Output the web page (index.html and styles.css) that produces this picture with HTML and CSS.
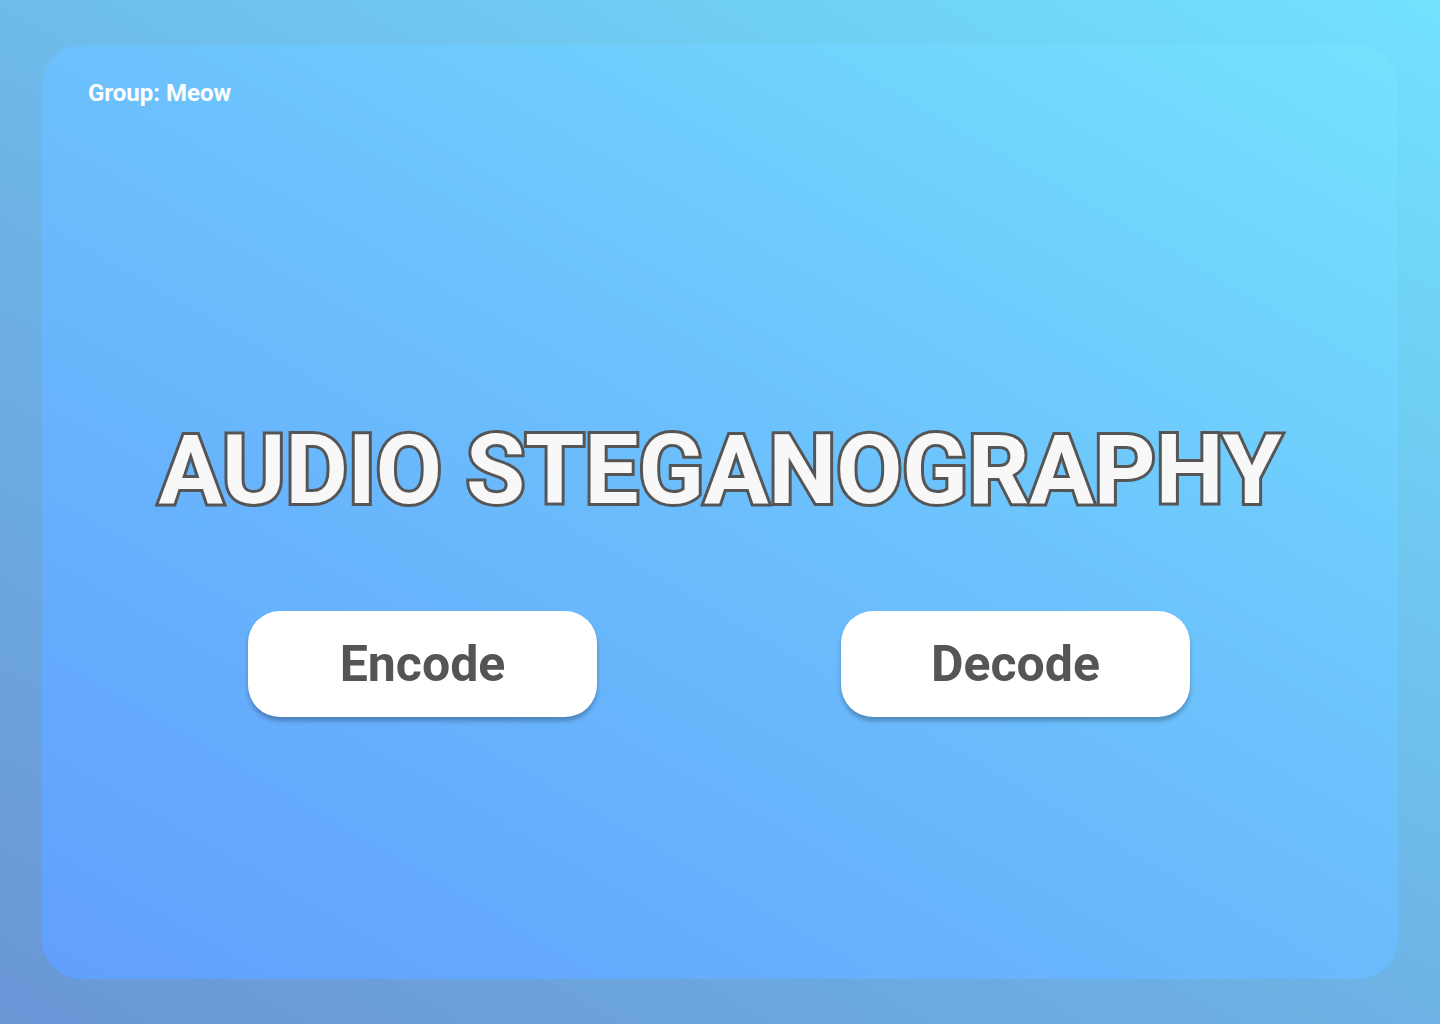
FILE: index.html
```html
<!DOCTYPE html>
<html lang="en">
<head>
<meta charset="utf-8">
<title>Audio Steganography</title>
<link rel="stylesheet" href="styles.css">
</head>
<body>
<main class="card">
  <div class="group">Group: Meow</div>
  <h1 class="title">AUDIO STEGANOGRAPHY</h1>
  <div class="actions">
    <button class="btn">Encode</button>
    <button class="btn">Decode</button>
  </div>
</main>
</body>
</html>
```
FILE: styles.css
```css
* { box-sizing: border-box; }
html, body { margin: 0; padding: 0; }
body {
  width: 1440px;
  height: 1024px;
  overflow: hidden;
  font-family: Roboto, "Liberation Sans", sans-serif;
  background: linear-gradient(30deg, #6a96d6 0%, #6db3e6 45%, #72e2fd 100%);
  padding: 45px 42px;
}
.card {
  height: 934px;
  border-radius: 40px;
  background: linear-gradient(30deg, #619ffd 0%, #6bbdfc 50%, #74e2fd 100%);
  padding: 36px 46px;
  display: flex;
  flex-direction: column;
}
.group {
  color: #ffffff;
  font-size: 24px;
  line-height: 1;
  font-weight: 700;
}
.title {
  margin: 317px 0 0;
  text-align: center;
  font-size: 96px;
  line-height: 1;
  font-weight: 700;
  color: #f8f8f8;
  -webkit-text-stroke: 6px #555555;
  paint-order: stroke fill;
}
.actions {
  margin-top: 93px;
  display: flex;
  justify-content: center;
  gap: 244px;
  padding-right: 2px;
}
.btn {
  width: 349px;
  height: 106px;
  border: none;
  border-radius: 32px;
  background: #ffffff;
  color: #555555;
  font-family: Roboto, "Liberation Sans", sans-serif;
  font-weight: 700;
  font-size: 50px;
  line-height: 1;
  box-shadow: 0 4px 4px rgba(0, 0, 0, 0.25);
  cursor: pointer;
}
```
